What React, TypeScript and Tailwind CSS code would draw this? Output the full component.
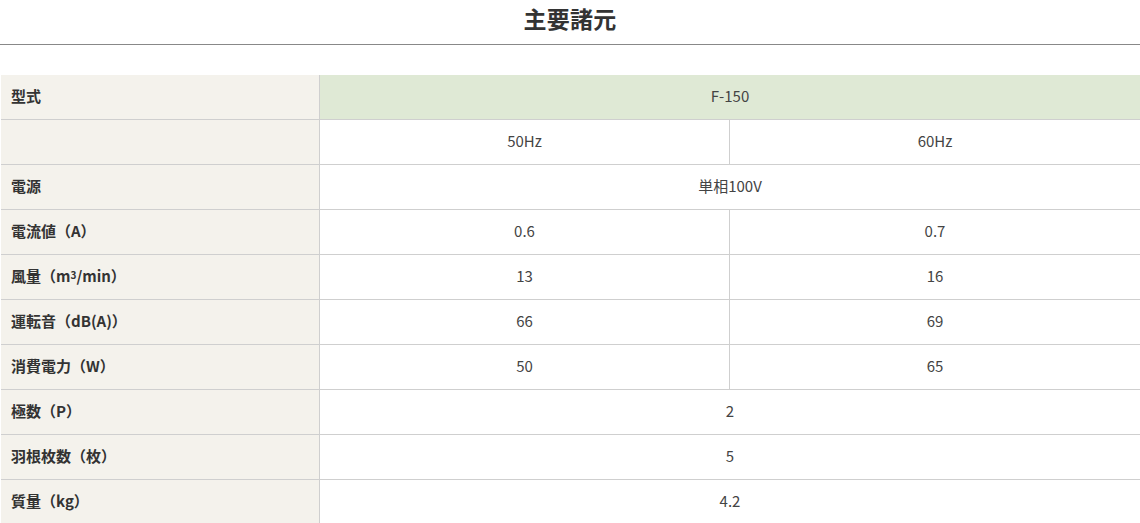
import React from "react";

const font = { fontFamily: '"Noto Sans CJK JP", "Noto Sans", sans-serif' };

type Row = { label: React.ReactNode; values: string[] };

const rows: Row[] = [
  { label: "電源", values: ["単相100V"] },
  { label: "電流値（A）", values: ["0.6", "0.7"] },
  {
    label: (
      <>
        風量（m<sup className="text-[10px] relative -top-[1px]">3</sup>/min）
      </>
    ),
    values: ["13", "16"],
  },
  { label: "運転音（dB(A)）", values: ["66", "69"] },
  { label: "消費電力（W）", values: ["50", "65"] },
  { label: "極数（P）", values: ["2"] },
  { label: "羽根枚数（枚）", values: ["5"] },
  { label: "質量（kg）", values: ["4.2"] },
];

function Label({ children }: { children?: React.ReactNode }) {
  return (
    <div className="w-[319px] shrink-0 bg-[#f4f2ec] border-r border-[#cfcfcf] flex items-center pl-[10px] pb-[2px] text-[15px] font-bold text-[#333]">
      {children}
    </div>
  );
}

const cell = "flex items-center justify-center pb-[2px] text-[15px] text-[#444]";

export default function App() {
  return (
    <div className="w-[1140px] bg-white" style={font}>
      <div className="h-[45px] flex items-center justify-center border-b border-[#888]">
        <h2 className="text-[23px] font-bold text-[#333] tracking-[0.3px] leading-none -mt-[8px]">主要諸元</h2>
      </div>
      <div className="mt-[30px] ml-[1px] w-[1139px]">
        <div className="flex h-[45px] border-b border-[#cfcfcf]">
          <Label>型式</Label>
          <div className={"flex-1 bg-[#dfe9d5] " + cell}>F-150</div>
        </div>
        <div className="flex h-[45px] border-b border-[#cfcfcf]">
          <Label />
          <div className={"w-[410px] border-r border-[#cfcfcf] " + cell}>50Hz</div>
          <div className={"flex-1 " + cell}>60Hz</div>
        </div>
        {rows.map((r, i) => (
          <div key={i} className="flex h-[45px] border-b border-[#cfcfcf]">
            <Label>{r.label}</Label>
            {r.values.length === 1 ? (
              <div className={"flex-1 " + cell}>{r.values[0]}</div>
            ) : (
              <>
                <div className={"w-[410px] border-r border-[#cfcfcf] " + cell}>{r.values[0]}</div>
                <div className={"flex-1 " + cell}>{r.values[1]}</div>
              </>
            )}
          </div>
        ))}
      </div>
    </div>
  );
}
